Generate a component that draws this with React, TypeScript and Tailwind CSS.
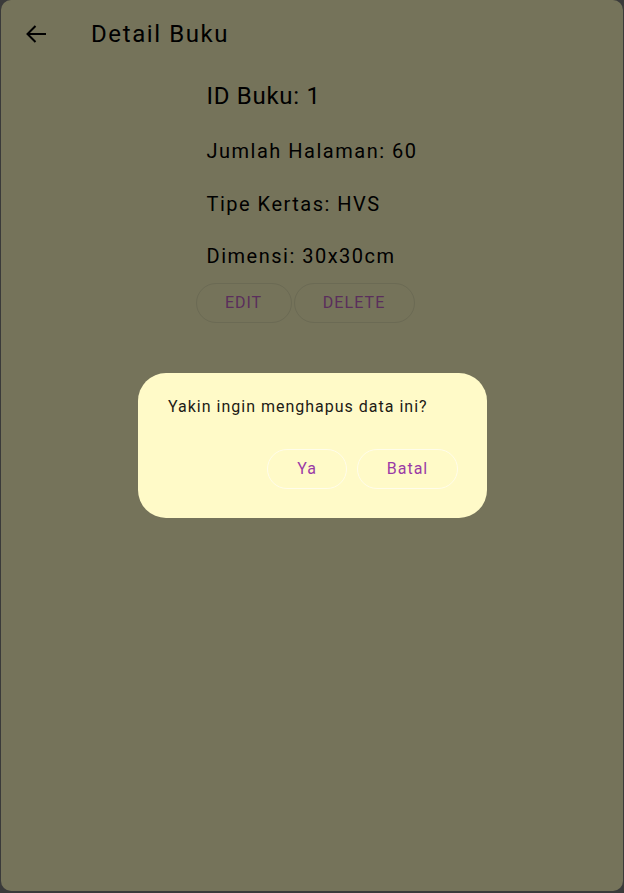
import React from "react";

export default function App() {
  return (
    <div className="w-[624px] h-[893px] bg-[#3a3a3a] pl-[1px] pr-[1px] pb-[2px] relative" style={{ fontFamily: "Roboto, 'Noto Sans', sans-serif" }}>
      <div className="w-full h-full rounded-[10px] bg-[#75735a] overflow-hidden flex flex-col">
        <div className="h-[67px] flex items-center pl-[24px] shrink-0">
          <svg width="22" height="20" viewBox="0 0 22 20" className="text-black">
            <path d="M21 10H2.5M10.5 2L2.5 10L10.5 18" fill="none" stroke="currentColor" strokeWidth="2" />
          </svg>
          <div className="ml-[44px] text-[24px] tracking-[1.6px] text-black leading-none">Detail Buku</div>
        </div>
        <div className="flex justify-center">
          <div className="flex flex-col items-start">
            <div className="text-[24px] tracking-[0.7px] text-black leading-[32px] mt-[13px]">ID Buku: 1</div>
            <div className="text-[20px] tracking-[1.5px] text-black leading-[28px] mt-[25px]">Jumlah Halaman: 60</div>
            <div className="text-[20px] tracking-[1.5px] text-black leading-[28px] mt-[25px]">Tipe Kertas: HVS</div>
            <div className="text-[20px] tracking-[1.5px] text-black leading-[28px] mt-[24px]">Dimensi: 30x30cm</div>
            <div className="flex -ml-[11px] mt-[13px] gap-[2px]">
              <div className="h-[40px] w-[96px] rounded-full border border-[#6b6a54] flex items-center justify-center text-[16px] tracking-[0.9px] text-[#5a2e5c]">EDIT</div>
              <div className="h-[40px] w-[121px] rounded-full border border-[#6b6a54] flex items-center justify-center text-[16px] tracking-[1.1px] text-[#5a2e5c]">DELETE</div>
            </div>
          </div>
        </div>
      </div>
      <div className="absolute left-[138px] top-[373px] w-[349px] h-[145px] rounded-[28px] bg-[#fffac8] px-[30px] pt-[22px]">
        <div className="text-[16px] tracking-[1px] text-[#1d1b16] leading-[24px]">Yakin ingin menghapus data ini?</div>
        <div className="flex justify-end gap-[10px] mt-[30px] -mr-[1px]">
          <div className="h-[40px] w-[80px] rounded-full border-[1.5px] border-[#fffdea] flex items-center justify-center text-[16px] tracking-[1px] text-[#9a3aa6]">Ya</div>
          <div className="h-[40px] w-[101px] rounded-full border-[1.5px] border-[#fffdea] flex items-center justify-center text-[16px] tracking-[1px] text-[#9a3aa6]">Batal</div>
        </div>
      </div>
    </div>
  );
}
